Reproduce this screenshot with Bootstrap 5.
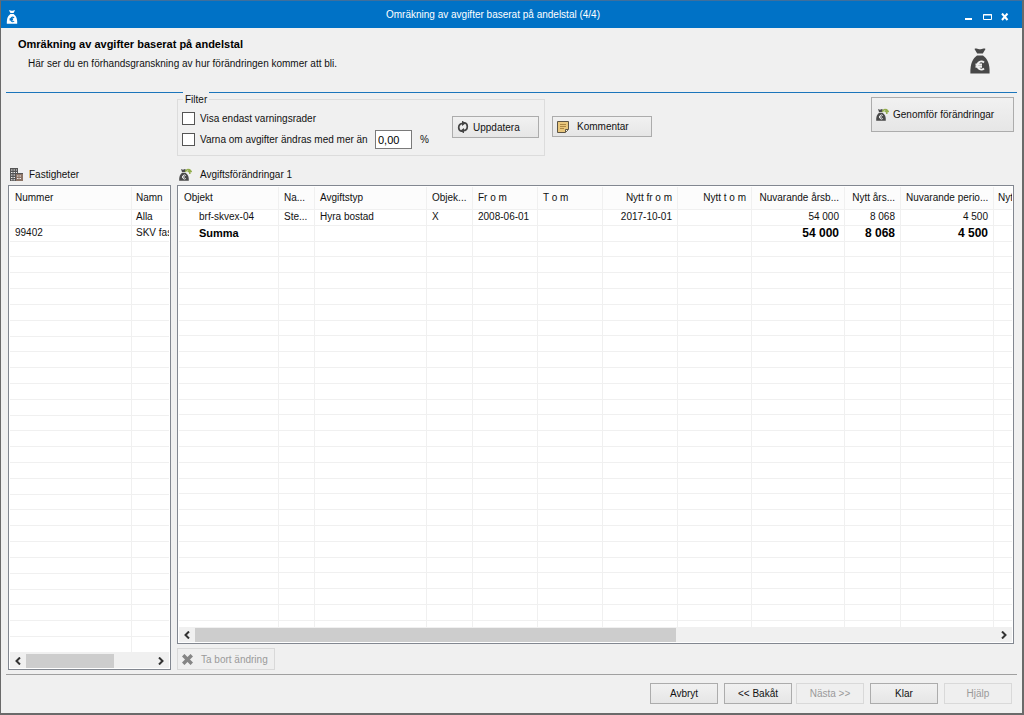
<!DOCTYPE html>
<html lang="sv">
<head>
<meta charset="utf-8">
<meta name="viewport" content="width=device-width, initial-scale=1">
<title>Omräkning av avgifter baserat på andelstal</title>
<link href="https://cdn.jsdelivr.net/npm/bootstrap@5.3.0/dist/css/bootstrap.min.css" rel="stylesheet">
<style>
  body { font-family: "Liberation Sans", Arial, sans-serif; font-size: 10px; line-height: 15px; color: #111; background: #f0f0f0; }
  svg { flex-shrink: 0; }
  .window { border: 1px solid #6a6a6a; border-top-color: #3f6f9c; border-right-width: 2px; border-bottom-width: 2px; }
  .titlebar { background: #0072c6; color: #fff; height: 27px; padding: 0 8px 0 5px; }
  .titlebar button { background: none; border: 0; padding: 0; width: 18px; height: 18px; color: #fff; line-height: 0; }
  .intro { margin: 0 5px; padding: 9px 27px 0 12px; height: 65px; border-bottom: 1px solid #1b75bb; }
  .intro h1 { font-size: 11px; line-height: 15px; font-weight: bold; margin: 0 0 4px; color: #000; }
  .intro p { margin: 0 0 0 10px; }
  .tools { padding: 0 8px 0 176px; height: 70px; }
  .filterbox { position: relative; width: 368px; height: 57px; margin-top: 6px; border: 1px solid #dcdcdc; padding: 11px 5px 0 4px; }
  .filterbox legend { position: absolute; top: -8px; left: 5px; width: auto; font-size: 10px; line-height: 15px; margin: 0; padding: 0 2px; background: #f0f0f0; float: none; }
  .form-check-input.tick { width: 13px; height: 13px; margin: 0 5px 0 0; border: 1px solid #555; border-radius: 0; }
  .label-warn { width: 171px; }
  .pct { width: 37px; height: 19px; border: 1px solid #7a7a7a; padding: 0 2px; font-size: 11px; background: #fff; }
  .btn.winbtn { border: 1px solid #acacac; border-radius: 0; background: linear-gradient(#f1f1f1, #e6e6e6); color: #111; font-size: 10px; line-height: 15px; padding: 0 4px; height: 21px; display: flex; align-items: center; white-space: nowrap; }
  .btn.winbtn:disabled { background: #efefef; border-color: #d9d9d9; color: #9a9a9a; opacity: 1; }
  .btn.btn-update { width: 87px; height: 22px; margin-top: 5px; }
  .btn.btn-comment { width: 100px; margin: 23px 0 0 7px; }
  .btn.btn-run { width: 143px; height: 35px; margin-top: 4px; }
  .btn.btn-remove { width: 98px; height: 22px; }
  .panels { padding: 0 8px 0 7px; gap: 6px; }
  .leftcol { width: 163px; }
  .caption-line { height: 22px; padding: 0 2px; gap: 8px; }
  .leftcol .caption-line { gap: 6px; }
  .listbox { background: #fff; border: 1px solid #828790; padding: 1px; }
  .listbox table { table-layout: fixed; width: 100%; height: 100%; border-collapse: separate; border-spacing: 0; }
  .listbox th, .listbox td { border-right: 1px solid #f0f0f0; border-bottom: 1px solid #f0f0f0; padding: 0 5px; font-weight: normal; line-height: 14px; white-space: nowrap; overflow: hidden; vertical-align: middle; }
  .listbox th { height: 23px; background: #fcfcfc; }
  .listbox th:last-child, .listbox td:last-child { border-right: 0; padding-right: 0; padding-left: 4px; }
  .listbox .tailrow td { height: 6px; line-height: 4px; font-size: 4px; border-bottom: 0; }
  .listbox td.indent { padding-left: 20px; }
  .listbox .sum td { font-size: 12px; font-weight: bold; color: #000; }
  .listbox .sum td.indent { font-size: 11px; }
  .hscroll { height: 15px; background: #f0f0f0; }
  .hscroll button { width: 16px; height: 15px; border: 0; padding: 0; background: none; line-height: 0; color: #333; }
  .thumb { background: #cdcdcd; height: 14px; }
  .footer-line { margin: 0 5px; border-top: 1px solid #a0a0a0; padding: 8px 5px 9px; gap: 6px; }
  .footer-line .btn.winbtn { width: 68px; justify-content: center; }
</style>
</head>
<body>
<svg class="d-none" aria-hidden="true">
  <symbol id="bag" viewBox="0 0 20 26">
    <path fill="currentColor" d="M4.500 1 C6-.2 8 1.800 10 1.200 C12 1.800 14-.2 15.500 1 L12.800 5.500 H7.200Z"/>
    <path fill="currentColor" d="M7 7.500 H13 C17 10.500 20 15 19.600 25.500 H.4 C0 15 3 10.500 7 7.500Z"/>
    <path fill="none" stroke="var(--euro)" stroke-width="1.900" d="M14 14.500 A4 4 0 1 0 14 20.500 M5.500 16.500 H12 M5.500 18.700 H12"/>
  </symbol>
  <symbol id="bagarrow" viewBox="0 0 13 13">
    <path fill="#4a4a4a" d="M2 1 L4 1.700 L6 1 L7 2 L6 4 H3Z M3 4.700 H6.500 C9 6.500 10 8.500 9.800 12.700 H.2 C0 8.500 1 6.500 3 4.700Z"/>
    <path fill="none" stroke="#f0f0f0" d="M6.800 7.500 A2 2 0 1 0 6.800 10.500 M3 9 H6"/>
    <path fill="none" stroke="#93ad4d" stroke-width="1.500" d="M6.500 4 C7 1.500 9 1 11 2 M10.800 6 V2.500 M8.800 4 L10.800 1.800 L12.600 4"/>
  </symbol>
</svg>
<div class="window min-vh-100 d-flex flex-column">
  <header class="titlebar d-flex align-items-center">
    <svg class="mt-1" width="12" height="14" style="--euro:#0072c6"><use href="#bag"/></svg>
    <div class="flex-grow-1 text-center ps-2">Omräkning av avgifter baserat på andelstal (4/4)</div>
    <button class="mt-1" type="button" aria-label="Minimera"><svg width="8" height="8"><path fill="#fff" d="M0 5h7v2H0z"/></svg></button>
    <button class="mt-1" type="button" aria-label="Maximera"><svg width="9" height="8"><path fill="none" stroke="#fff" d="M.5 1.500h8v5h-8z M0 2h9"/></svg></button>
    <button class="mt-1" type="button" aria-label="Stäng"><svg width="8" height="8"><path stroke="#fff" stroke-width="2" d="M1 .5l5.500 6.500M6.500.5L1 7"/></svg></button>
  </header>
  <section class="intro d-flex justify-content-between">
    <div>
      <h1>Omräkning av avgifter baserat på andelstal</h1>
      <p>Här ser du en förhandsgranskning av hur förändringen kommer att bli.</p>
    </div>
    <svg class="mt-2" width="20" height="32" viewBox="0 -3 20 32" style="color:#484848;--euro:#f0f0f0"><use href="#bag" width="20" height="26"/></svg>
  </section>
  <section class="tools d-flex align-items-start">
    <fieldset class="filterbox d-flex justify-content-between">
      <legend>Filter</legend>
      <div>
        <div class="d-flex align-items-center mb-1">
          <input class="form-check-input tick" type="checkbox" id="onlywarn"><label for="onlywarn">Visa endast varningsrader</label>
        </div>
        <div class="d-flex align-items-center">
          <input class="form-check-input tick" type="checkbox" id="warnmore"><label class="label-warn" for="warnmore">Varna om avgifter ändras med mer än</label>
          <input class="pct ms-1" type="text" value="0,00" aria-label="Procent"><span class="ms-2">%</span>
        </div>
      </div>
      <button type="button" class="btn winbtn btn-update">
        <svg class="me-1" width="12" height="12" viewBox="0 0 12 12"><g fill="none" stroke="#444" stroke-width="1.700"><path d="M5.500 10.200 H4.500 Q1.700 9.500 1.700 6.500 Q1.700 2.500 6 2.300"/><path d="M6.500 1.800 H7.500 Q10.300 2.500 10.300 5.500 Q10.300 9.500 6 9.700"/></g><path fill="#444" d="M5 -.5 L8.800 2.200 L5 5Z M7 7 L3.200 9.800 L7 12.500Z"/></svg>
        Uppdatera</button>
    </fieldset>
    <button type="button" class="btn winbtn btn-comment">
      <svg class="me-2" width="12" height="12" viewBox="0 0 12 12"><path fill="#e9c77c" stroke="#5c5445" d="M.5.5h11v8l-3 3h-8z"/><path stroke="#ad8744" d="M3 3.500h6M3 5.500h6M3 7.500h4"/><path fill="#fff" stroke="#5c5445" d="M11 8.500H8.500V11"/></svg>
      Kommentar</button>
    <button type="button" class="btn winbtn btn-run ms-auto">
      <svg class="me-1" width="13" height="13"><use href="#bagarrow"/></svg>
      Genomför förändringar</button>
  </section>
  <main class="panels d-flex flex-grow-1">
    <section class="leftcol flex-shrink-0 d-flex flex-column">
      <div class="caption-line d-flex align-items-center">
        <svg width="13" height="13" viewBox="0 0 13 13"><path fill="#555" d="M0 0h8v5h5v8H0z"/><path stroke="#eee" stroke-width="1" stroke-dasharray="1.500 1" d="M1 2h6M1 4.500h6M1 7h5M1 9.500h5M1 11.800h5"/><path fill="#8c7466" d="M6 6h7v7H6z"/><path stroke="#eee" stroke-dasharray="1.500 1" d="M7 8h5M7 10.500h5"/></svg>
        Fastigheter</div>
      <div class="listbox flex-grow-1 d-flex flex-column">
        <div class="flex-grow-1 overflow-hidden">
          <table data-rows="26">
            <colgroup><col style="width:122px"><col></colgroup>
            <thead><tr><th>Nummer</th><th>Namn</th></tr></thead>
            <tbody>
              <tr><td></td><td>Alla</td></tr>
              <tr><td>99402</td><td>SKV fas</td></tr>
            </tbody>
          </table>
        </div>
        <div class="hscroll d-flex align-items-center">
          <button type="button" aria-label="Rulla vänster"><svg width="6" height="8"><path fill="none" stroke="currentColor" stroke-width="2" d="M5 .5L1.500 4 5 7.500"/></svg></button>
          <div class="flex-grow-1"><div class="thumb" style="width:69%"></div></div>
          <button type="button" aria-label="Rulla höger"><svg width="6" height="8"><path fill="none" stroke="currentColor" stroke-width="2" d="M1 .5L4.500 4 1 7.500"/></svg></button>
        </div>
      </div>
    </section>
    <section class="flex-grow-1 d-flex flex-column" style="min-width:0">
      <div class="caption-line d-flex align-items-center">
        <svg width="13" height="13"><use href="#bagarrow"/></svg>
        Avgiftsförändringar 1</div>
      <div class="listbox flex-grow-1 d-flex flex-column">
        <div class="flex-grow-1 overflow-hidden">
          <table data-rows="24" data-tail="1">
            <colgroup><col style="width:100px"><col style="width:36px"><col style="width:112px"><col style="width:46px"><col style="width:65px"><col style="width:65px"><col style="width:75px"><col style="width:74px"><col style="width:93px"><col style="width:56px"><col style="width:93px"><col></colgroup>
            <thead><tr><th>Objekt</th><th>Na...</th><th>Avgiftstyp</th><th>Objek...</th><th>Fr o m</th><th>T o m</th><th class="text-end">Nytt fr o m</th><th class="text-end">Nytt t o m</th><th class="text-end">Nuvarande årsb...</th><th class="text-end">Nytt års...</th><th class="text-end">Nuvarande perio...</th><th>Nyt</th></tr></thead>
            <tbody>
              <tr><td class="indent">brf-skvex-04</td><td>Ste...</td><td>Hyra bostad</td><td>X</td><td>2008-06-01</td><td></td><td class="text-end">2017-10-01</td><td></td><td class="text-end">54 000</td><td class="text-end">8 068</td><td class="text-end">4 500</td><td></td></tr>
              <tr class="sum"><td class="indent">Summa</td><td></td><td></td><td></td><td></td><td></td><td></td><td></td><td class="text-end">54 000</td><td class="text-end">8 068</td><td class="text-end">4 500</td><td></td></tr>
            </tbody>
          </table>
        </div>
        <div class="hscroll d-flex align-items-center">
          <button type="button" aria-label="Rulla vänster"><svg width="6" height="8"><path fill="none" stroke="currentColor" stroke-width="2" d="M5 .5L1.500 4 5 7.500"/></svg></button>
          <div class="flex-grow-1"><div class="thumb" style="width:60%"></div></div>
          <button type="button" aria-label="Rulla höger"><svg width="6" height="8"><path fill="none" stroke="currentColor" stroke-width="2" d="M1 .5L4.500 4 1 7.500"/></svg></button>
        </div>
      </div>
      <div class="pt-1">
        <button type="button" class="btn winbtn btn-remove" disabled>
          <svg class="me-2" width="11" height="11" viewBox="0 0 11 11"><path stroke="#858585" stroke-width="3.500" d="M1.200 1.200l8.600 8.600M9.800 1.200L1.200 9.800"/></svg>
          Ta bort ändring</button>
      </div>
    </section>
  </main>
  <footer class="footer-line d-flex justify-content-end mt-1">
    <button type="button" class="btn winbtn">Avbryt</button>
    <div class="d-flex">
      <button type="button" class="btn winbtn">&lt;&lt; Bakåt</button>
      <button type="button" class="btn winbtn ms-1" disabled>Nästa &gt;&gt;</button>
    </div>
    <button type="button" class="btn winbtn">Klar</button>
    <button type="button" class="btn winbtn" disabled>Hjälp</button>
  </footer>
</div>
<script src="https://cdn.jsdelivr.net/npm/bootstrap@5.3.0/dist/js/bootstrap.bundle.min.js"></script>
<script>
  // Fill each list with empty grid rows below its data.
  document.querySelectorAll('table[data-rows]').forEach(function (table) {
    var cells = '<td>&nbsp;</td>'.repeat(table.querySelectorAll('th').length);
    var rows = ('<tr>' + cells + '</tr>').repeat(+table.dataset.rows);
    if (table.dataset.tail) rows += '<tr class="tailrow">' + cells + '</tr>';
    table.tBodies[0].insertAdjacentHTML('beforeend', rows);
  });
</script>
</body>
</html>
